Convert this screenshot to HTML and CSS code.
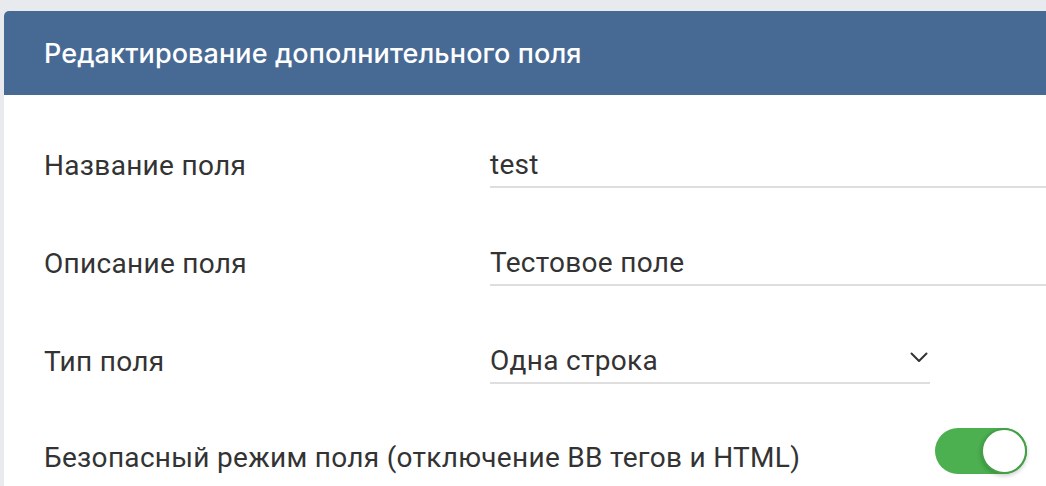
FILE: index.html
```html
<!DOCTYPE html>
<html lang="ru">
<head>
<meta charset="utf-8">
<title>Редактирование дополнительного поля</title>
<link rel="stylesheet" href="styles.css">
</head>
<body>
<div class="card">
  <div class="card-header">Редактирование дополнительного поля</div>
  <div class="card-body">
    <div class="row">
      <div class="label">Название поля</div>
      <div class="field wide">test</div>
    </div>
    <div class="row">
      <div class="label">Описание поля</div>
      <div class="field wide">Тестовое поле</div>
    </div>
    <div class="row">
      <div class="label">Тип поля</div>
      <div class="field select">
        <span>Одна строка</span>
        <svg class="chevron" width="18" height="11" viewBox="0 0 18 11"><path d="M1.5 1.5 L9 9 L16.5 1.5" fill="none" stroke="#333" stroke-width="2" stroke-linecap="round" stroke-linejoin="round"/></svg>
      </div>
    </div>
    <div class="row toggle-row">
      <div class="label">Безопасный режим поля (отключение BB тегов и HTML)</div>
      <div class="toggle"><div class="knob"></div></div>
    </div>
  </div>
</div>
</body>
</html>
```
FILE: styles.css
```css
html, body {
  margin: 0;
  padding: 0;
  overflow: hidden;
}
body {
  background: #e8eaed;
  font-family: Roboto, "Noto Sans", sans-serif;
  color: #333;
  height: 486px;
}
.card {
  margin: 11px 0 0 4px;
  width: 1063px;
  background: #fff;
  border-top-left-radius: 5px;
  overflow: hidden;
  height: 475px;
}
.card-header {
  background: #476a95;
  color: #fff;
  height: 84px;
  padding: 0 40px;
  display: flex;
  align-items: center;
  font-family: Inter, Roboto, sans-serif;
  font-size: 27px;
  letter-spacing: 0.1px;
  font-weight: 500;
  box-sizing: border-box;
}
.card-body {
  padding: 45px 40px 0;
  display: flex;
  flex-direction: column;
  gap: 50px;
}
.row {
  display: flex;
  align-items: center;
}
.label {
  width: 446px;
  flex: none;
  font-size: 28px;
  line-height: 34px;
  letter-spacing: 0.3px;
  padding-top: 3px;
}
.field {
  height: 48px;
  box-sizing: border-box;
  border-bottom: 2px solid #dedede;
  font-size: 28px;
  letter-spacing: 0.3px;
  display: flex;
  align-items: center;
  padding-top: 3px;
}
.field.wide {
  flex: 1;
  margin-right: -40px;
}
.field.select {
  width: 440px;
  justify-content: space-between;
  padding-right: 2px;
}
.chevron {
  display: block;
  margin-top: -6px;
}
.toggle-row {
  height: 48px;
  justify-content: space-between;
}
.toggle-row .label {
  width: auto;
  padding-top: 0;
}
.toggle {
  flex: none;
  width: 92px;
  height: 46px;
  border-radius: 23px;
  background: #4caf50;
  position: relative;
  margin-top: -14px;
}
.knob {
  position: absolute;
  right: 0;
  top: 0;
  width: 46px;
  height: 46px;
  box-sizing: border-box;
  border-radius: 50%;
  background: #fff;
  border: 2px solid #43a047;
  box-shadow: 0 2px 4px rgba(0,0,0,0.2);
}
```
